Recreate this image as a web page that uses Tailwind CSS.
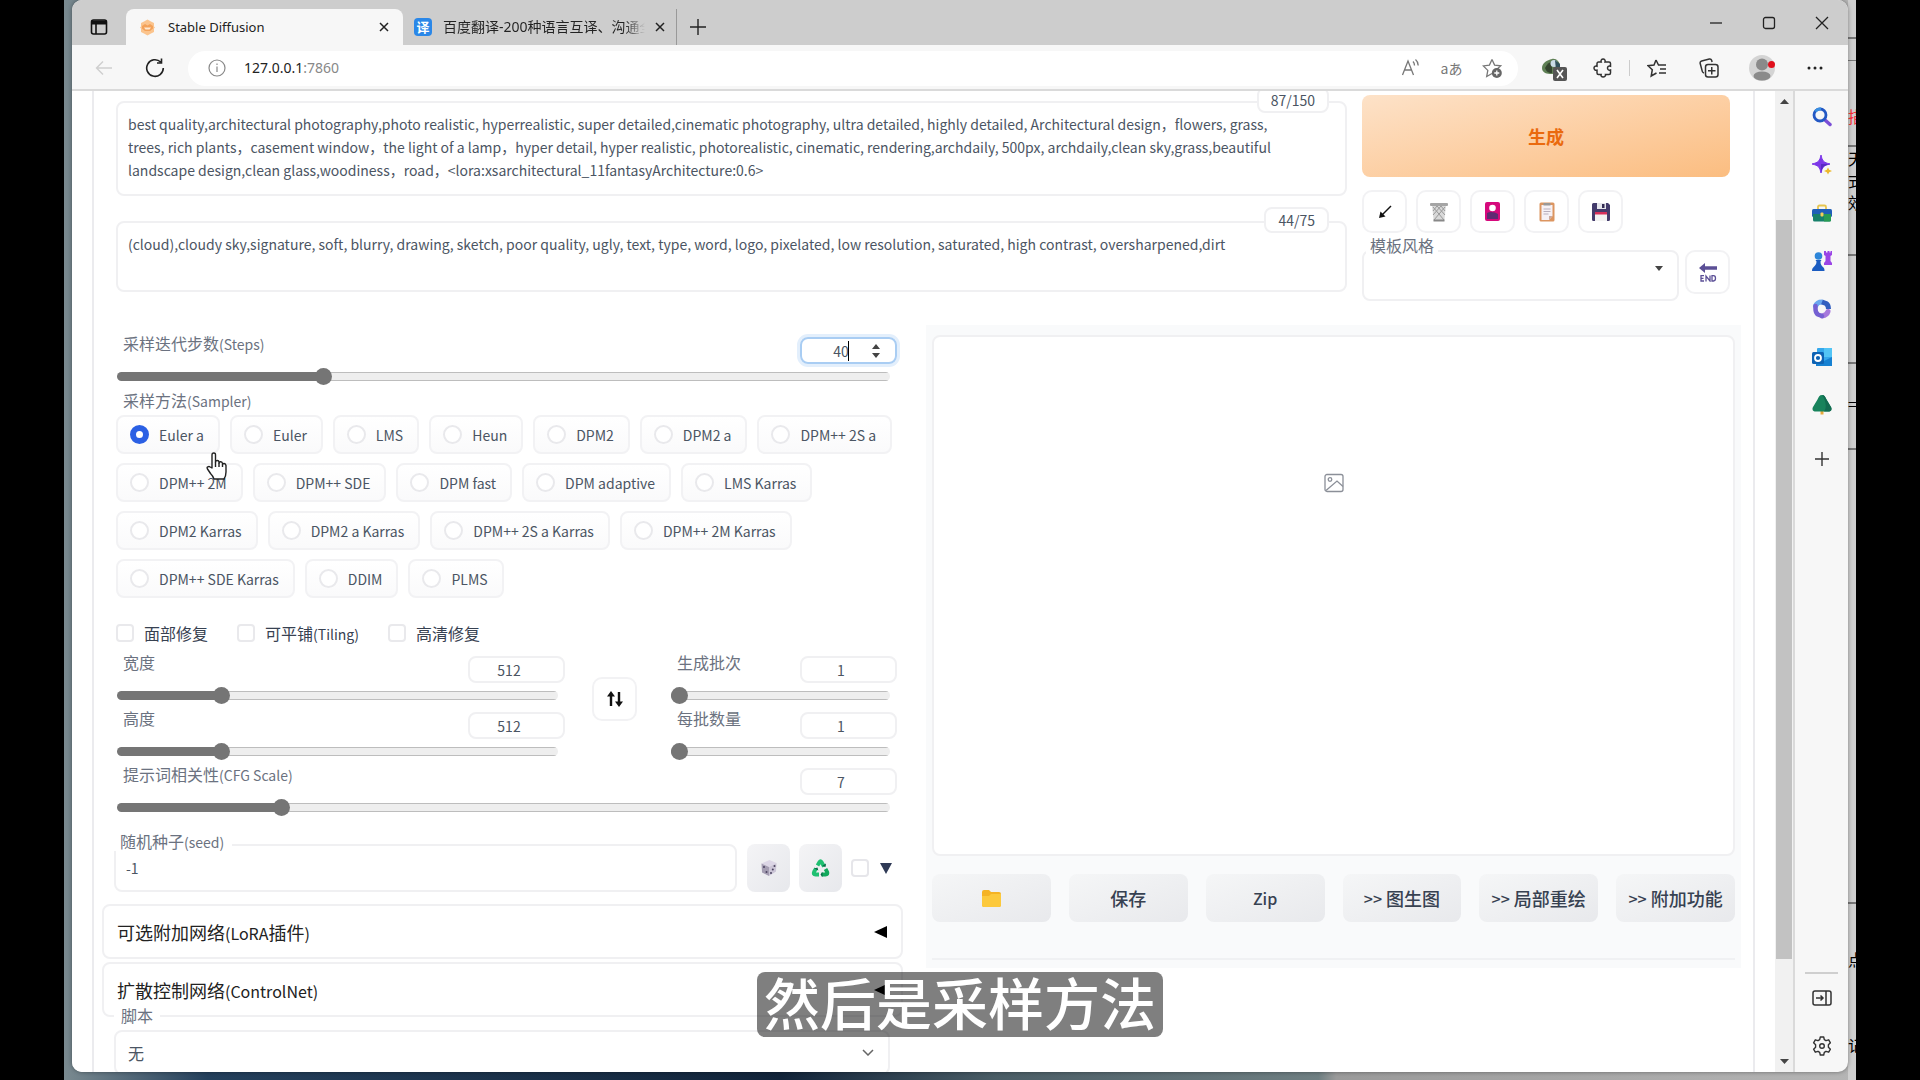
<!DOCTYPE html>
<html lang="zh-CN">
<head>
<meta charset="utf-8"/>
<meta content="width=device-width, initial-scale=1.0" name="viewport"/>
<title>Stable Diffusion</title>
<script src="https://cdn.jsdelivr.net/npm/@tailwindcss/browser@4"></script>
</head>
<body class="h-screen overflow-hidden bg-black px-16 font-['Noto_Sans_CJK_SC',sans-serif] text-sm text-[#4b5563]">
<div class="relative h-full overflow-hidden bg-[linear-gradient(to_right,#7a8a90_0,#24405c_8%,#12243a_40%,#4a5d66_52%,#6f7f82_70%,#9a9a9a_71%,#b5b5b5_100%)] px-2 pb-2">

<!-- document window behind the browser, only its edge shows -->
<div class="absolute inset-y-0 right-0 w-2 overflow-hidden bg-[#cfcfcf] text-base leading-[22px] text-black">
<div class="h-[39px] border-b-2 border-[#777]"></div>
<div class="h-[22px] border-b border-[#777]"></div>
<div class="h-[86px] border-b-2 border-[#777] pt-11 text-red-500">描</div>
<div class="h-[109px] border-b-2 border-[#777] pt-0">天式效</div>
<div class="h-[108px] border-b-2 border-[#777]"></div>
<div class="h-[86px] border-b-2 border-[#777] pt-7">=2</div>
<div class="h-[454px] border-b-2 border-[#777] pt-[380px]">“</div>
<div class="pt-11">点</div>
<div class="pt-16">记</div>
</div>

<div class="relative flex h-full flex-col overflow-hidden rounded-[10px] bg-[#f7f7f7] shadow-[0_0_4px_#0006]">

<!-- tabs -->
<div class="flex h-[45px] shrink-0 items-end bg-[#cdcdcd] font-['Noto_Sans','Noto_Sans_CJK_SC',sans-serif] text-[13px] text-[#222]">
<button aria-label="Tab actions" class="flex h-9 w-[54px] items-center justify-center">
<svg class="size-[18px]" fill="none" stroke="#111" stroke-width="1.6" viewBox="0 0 18 18"><rect height="14" rx="2" width="15" x="1.5" y="2"/><path d="M1.5 4.5h15" stroke-width="4"/><path d="M6 5v11"/></svg>
</button>
<div class="flex h-9 w-[277px] items-center rounded-t-lg bg-[#f7f7f7] pr-2 pl-[13px]">
<svg class="mr-3 size-[17px]" viewBox="0 0 17 17"><path d="M8.500 .5l3 1.800 3.500 1.700v3.500l1 1-1 1v3.500l-3.500 1.700-3 1.800-3-1.800L2 13V9.500l-1-1 1-1V4l3.500-1.700z" fill="#fbc48d"/><path d="M3 7l3-2 2.500 1.500L11 5l3 2v2.500L11 12H6L3 9.500z" fill="#f3a25a"/><path d="M5 8.500h7l-1.500 2h-4z" fill="#ffe9d2"/></svg>
<span class="flex-1">Stable Diffusion</span>
<button aria-label="Close tab" class="flex size-[22px] items-center justify-center"><svg class="size-[10px]" stroke="#222" stroke-width="1.5" viewBox="0 0 10 10"><path d="M1 1l8 8M9 1l-8 8"/></svg></button>
</div>
<div class="flex h-9 w-[274px] items-center border-r border-[#999] pr-[5px] pl-[11px]">
<span class="mr-[11px] flex size-[18px] shrink-0 items-center justify-center rounded-sm bg-[#2a87e8] text-[13px] font-bold text-white">译</span>
<span class="h-5 flex-1 overflow-hidden bg-gradient-to-r from-[#222] from-90% to-transparent bg-clip-text text-sm leading-5 whitespace-nowrap text-transparent">百度翻译-200种语言互译、沟通全世界</span>
<button aria-label="Close tab" class="ml-1 flex size-[22px] items-center justify-center"><svg class="size-[10px]" stroke="#222" stroke-width="1.5" viewBox="0 0 10 10"><path d="M1 1l8 8M9 1l-8 8"/></svg></button>
</div>
<button aria-label="New tab" class="flex h-9 w-[42px] items-center justify-center"><svg class="size-4" stroke="#222" stroke-width="1.4" viewBox="0 0 16 16"><path d="M8 0v16M0 8h16"/></svg></button>
<div class="flex-1"></div>
<button aria-label="Minimize" class="flex h-11 w-[53px] items-center justify-center"><svg class="size-[14px]" fill="none" stroke="#222" stroke-width="1.3" viewBox="0 0 14 14"><path d="M1 7h12"/></svg></button>
<button aria-label="Maximize" class="flex h-11 w-[53px] items-center justify-center"><svg class="size-[14px]" fill="none" stroke="#222" stroke-width="1.3" viewBox="0 0 14 14"><rect height="11" rx="2" width="11" x="1.500" y="1.500"/></svg></button>
<button aria-label="Close" class="flex h-11 w-[53px] items-center justify-center"><svg class="size-[14px]" fill="none" stroke="#222" stroke-width="1.3" viewBox="0 0 14 14"><path d="M1 1l12 12M13 1L1 13"/></svg></button>
</div>

<!-- toolbar -->
<div class="flex h-[46px] shrink-0 items-center border-b-2 border-[#dadada] pt-[2px] pr-[7px] pl-[9px]">
<button aria-label="Back" class="flex w-[46px] justify-center"><svg class="size-[18px]" fill="none" stroke="#cfcfcf" stroke-width="1.4" viewBox="0 0 18 18"><path d="M17 9H1.500M8 2.500L1.500 9 8 15.500"/></svg></button>
<button aria-label="Refresh" class="flex w-14 justify-center"><svg class="size-5" fill="none" stroke="#222" stroke-width="1.6" viewBox="0 0 20 20"><path d="M18.300 10a8.300 8.300 0 1 1-2.600-6M16.500 .5v4.500H12"/></svg></button>
<div class="ml-[5px] flex h-[35px] flex-1 items-center rounded-full bg-white pr-[5px] pl-5">
<svg class="size-[18px]" fill="none" stroke="#888" stroke-width="1.2" viewBox="0 0 18 18"><circle cx="9" cy="9" r="8"/><path d="M9 7.500V13M9 4.500v1.600"/></svg>
<input aria-label="Address" class="sr-only" type="text" value="127.0.0.1:7860"/>
<span class="ml-[18px] flex-1 font-['Noto_Sans',sans-serif] text-sm text-[#222]">127.0.0.1<span class="text-[#888]">:7860</span></span>
<button aria-label="Read aloud" class="flex w-[41px] justify-center"><svg class="size-5" fill="none" stroke="#777" stroke-width="1.3" viewBox="0 0 20 20"><path d="M1.500 17L7 3l5.500 14M3.500 12h7M12 3.500c1 1 1.500 2.300 1.500 4M14.500 1.500c1.800 1.500 2.700 3.600 2.700 6"/></svg></button>
<button aria-label="Translate" class="w-[41px] text-sm leading-5 text-[#777]">aあ</button>
<button aria-label="Add to favorites" class="flex w-[41px] justify-center"><svg class="size-[21px]" fill="none" stroke="#777" stroke-width="1.300" viewBox="0 0 21 21"><path d="M10 1.500l2.600 5.600 6.100.7-4.500 4.200 .5 2.500M10 15.500l-5.300 3 1.100-6.100L1.300 7.900l6.100-.8L10 1.500"/><circle cx="14.800" cy="15" fill="#666" r="5" stroke="none"/><path d="M14.800 12.500v5M12.300 15h5" stroke="#fff"/></svg></button>
</div>
<button aria-label="Extension" class="ml-[11px] flex w-[49px] justify-center"><svg class="h-7 w-[26px]" viewBox="0 0 26 28"><path d="M1 14c0-5 5-8 10-9 4-1 8 3 8 7s-3 8-8 8-10-1-10-6z" fill="#5f8055"/><path d="M4 14c2-4 4-6 7-6v11c-4 0-6-2-7-5z" fill="#34452f"/><circle cx="13" cy="9.500" fill="#c9dbe6" r="3.500"/><path d="M14 6l5 4v6h-4z" fill="#31515c"/><rect fill="#555" height="14" rx="2" width="14" x="12" y="13"/><path d="M16 16l6 8M22 16l-6 8" stroke="#fff" stroke-width="1.600"/></svg></button>
<button aria-label="Extensions" class="flex w-[49px] justify-center"><svg class="size-5" fill="none" stroke="#333" stroke-width="1.500" viewBox="0 0 20 20"><path d="M5.500 4h2.700c-.6-1.800.4-3 1.900-3s2.500 1.200 1.900 3H16a1.500 1.500 0 0 1 1.500 1.500v2.700c-2-.5-3 .5-3 1.900s1 2.400 3 1.900v3a1.500 1.500 0 0 1-1.500 1.500h-3.500c.4 1.500-.9 2.500-2.400 2.500s-2.500-1-2-2.500H5.500A1.500 1.500 0 0 1 4 15v-2.800c-1.800.5-3-.6-3-2.100s1.200-2.400 3-1.900V5.500A1.500 1.500 0 0 1 5.500 4z"/></svg></button>
<div class="mr-px ml-[2px] h-4 w-px bg-[#ccc]"></div>
<button aria-label="Favorites" class="flex w-[52px] justify-center"><svg class="size-5" fill="none" stroke="#333" stroke-width="1.500" viewBox="0 0 20 20"><path d="M9 2l-2 5-6 .7 4.300 4L4.200 18 9.500 15M9 2l2.500 5H19M13 11h6M12 15h7"/></svg></button>
<button aria-label="Collections" class="flex w-[52px] justify-center"><svg class="size-5" fill="none" stroke="#333" stroke-width="1.500" viewBox="0 0 20 20"><path d="M5 15c-1-.3-1.500-.8-1.700-1.600L1.200 5.500c-.3-1.200.3-2.200 1.500-2.500l7.600-2c1-.2 2 .3 2.300 1.300l.5 1.700"/><rect height="12.500" rx="2.500" width="12.500" x="6.500" y="6.500"/><path d="M12.750 9v7.500M9 12.750h7.500"/></svg></button>
<button aria-label="Profile" class="flex w-[53px] justify-center"><svg class="size-[26px]" viewBox="0 0 26 26"><circle cx="13" cy="13" fill="#d4d4d4" r="13"/><circle cx="13" cy="9.500" fill="#8a8a8a" r="6"/><ellipse cx="13" cy="21" fill="#8a8a8a" rx="8.500" ry="4.500"/><circle cx="22.500" cy="9.500" fill="#e0101c" r="3.500"/></svg></button>
<button aria-label="Settings and more" class="flex w-[53px] justify-center"><svg class="h-1 w-4" fill="#222" viewBox="0 0 16 4"><circle cx="2" cy="2" r="1.500"/><circle cx="8" cy="2" r="1.500"/><circle cx="14" cy="2" r="1.500"/></svg></button>
</div>

<div class="flex min-h-0 flex-1">
<!-- page -->
<main class="min-w-0 flex-1 overflow-hidden bg-white pr-5 pl-5">
<div class="h-full overflow-hidden border-x-2 border-[#ebebee]">

<section class="flex items-start gap-[15px] pr-[23px] pl-[22px]">
<div class="min-w-0 flex-1 pt-[10px]">
<div class="relative mb-[25px] h-[95px] rounded-lg border-2 border-[#f0f0f2] px-[10px] pt-[10px]">
<textarea aria-label="Prompt" class="block h-[72px] w-full resize-none overflow-hidden text-sm leading-[23px] outline-none">best quality,architectural photography,photo realistic, hyperrealistic, super detailed,cinematic photography, ultra detailed, highly detailed, Architectural design，flowers, grass,
trees, rich plants，casement window，the light of a lamp，hyper detail, hyper realistic, photorealistic, cinematic, rendering,archdaily, 500px, archdaily,clean sky,grass,beautiful
landscape design,clean glass,woodiness，road，&lt;lora:xsarchitectural_11fantasyArchitecture:0.6&gt;</textarea>
<span class="absolute -top-4 right-4 rounded-lg border-2 border-[#f0f0f2] bg-white px-3 leading-[22px]">87/150</span>
</div>
<div class="relative h-[71px] rounded-lg border-2 border-[#f0f0f2] px-[10px] pt-[10px]">
<textarea aria-label="Negative prompt" class="block h-12 w-full resize-none overflow-hidden text-sm leading-[23px] outline-none">(cloud),cloudy sky,signature, soft, blurry, drawing, sketch, poor quality, ugly, text, type, word, logo, pixelated, low resolution, saturated, high contrast, oversharpened,dirt</textarea>
<span class="absolute -top-4 right-4 rounded-lg border-2 border-[#f0f0f2] bg-white px-3 leading-[22px]">44/75</span>
</div>
</div>
<div class="w-[368px] pt-1">
<button class="h-[82px] w-full rounded-lg bg-linear-to-br from-[#fde2c8] to-[#fbbd80] text-lg font-bold text-[#ea6a0e]">生成</button>
<div class="mt-[13px] flex gap-[9px]">
<button aria-label="Read parameters" class="flex h-[43px] w-[45px] items-center justify-center rounded-[10px] border-2 border-[#f2f2f4]"><svg class="size-[14px]" stroke="#111" stroke-width="1.5" viewBox="0 0 14 14"><path d="M13 1L4 10"/><path d="M1 13l1.500-6.500 5 5z" fill="#111" stroke="none"/></svg></button>
<button aria-label="Clear prompt" class="flex h-[43px] w-[45px] items-center justify-center rounded-[10px] border-2 border-[#f2f2f4]"><svg class="h-5 w-[18px]" viewBox="0 0 18 20"><path d="M2 3h14l-1.700 16H3.700z" fill="#d9d9d9"/><path d="M3 5l11 13M7 4l8 9M11 4l4 5M15 5L4 18M11 4l-8 9M7 4L3 9" stroke="#999" stroke-width="1"/><rect fill="#a5a5a5" height="3" rx="1" width="18" y="1"/><path d="M3.500 18.500h11" stroke="#888" stroke-width="2"/></svg></button>
<button aria-label="Extra networks" class="flex h-[43px] w-[45px] items-center justify-center rounded-[10px] border-2 border-[#f2f2f4]"><svg class="h-[19px] w-[15px]" viewBox="0 0 15 19"><rect fill="#d6097c" height="19" rx="2" width="15"/><path d="M2 11c3-2 8-1 11 1v5H2z" fill="#5f2a72"/><circle cx="7.500" cy="6" fill="#fff" r="3.300"/></svg></button>
<button aria-label="Apply style" class="flex h-[43px] w-[45px] items-center justify-center rounded-[10px] border-2 border-[#f2f2f4]"><svg class="h-5 w-4" viewBox="0 0 16 20"><rect fill="#dc9560" height="19" rx="1.500" width="15" x=".5" y=".5"/><path d="M2.500 3h11v11l-3.500 4H2.500z" fill="#f6f1f5"/><path d="M10 18v-4h3.500z" fill="#c9a9a0"/><rect fill="#999" height="2.500" width="7" x="4.500" y="1"/><path d="M4.500 7h7M4.500 9.500h7M4.500 12h5" stroke="#b8aebc"/></svg></button>
<button aria-label="Save style" class="flex h-[43px] w-[45px] items-center justify-center rounded-[10px] border-2 border-[#f2f2f4]"><svg class="size-[18px]" viewBox="0 0 18 18"><path d="M0 1.500A1.500 1.500 0 0 1 1.500 0H16l2 2v14.500a1.500 1.500 0 0 1-1.500 1.500h-15A1.500 1.500 0 0 1 0 16.500z" fill="#433b6b"/><rect fill="#e6e6ec" height="6" width="9" x="5"/><rect fill="#322b52" height="4" width="2.500" x="10" y="1"/><rect fill="#f2f2f2" height="9" width="12" x="3" y="9"/><rect fill="#d6305b" height="2.500" width="12" x="3" y="9"/></svg></button>
</div>
<div class="mt-[17px] flex items-start gap-[6px]">
<div class="relative flex-1">
<label class="absolute -top-[15px] left-1 bg-white px-1 text-base leading-5 text-[#6b7280]" for="styles">模板风格</label>
<select class="block h-[51px] w-full appearance-none rounded-lg border-2 border-[#f0f0f2] px-3" id="styles"><option></option></select>
<svg class="absolute top-4 right-4 h-[5px] w-2" fill="#444" viewBox="0 0 8 5"><path d="M0 0h8L4 5z"/></svg>
</div>
<button aria-label="Apply selected styles" class="flex h-[44px] w-[45px] items-center justify-center rounded-[10px] border-2 border-[#f2f2f4]"><svg class="h-[19px] w-[18px]" fill="none" stroke="#5b4f96" viewBox="0 0 18 19"><path d="M5 5h13" stroke-width="3.500"/><path d="M0 5l6-5v10z" fill="#5b4f96" stroke="none"/><path d="M5 12.700H2V18h3M2 15.300h2.500M7 18.500v-5.500l4 5v-5.500M13 12.700h1.500q2 0 2 2.600t-2 2.700H13z" stroke-width="1.300"/></svg></button>
</div>
</div>
</section>

<section class="mt-6 flex items-start gap-[23px] pr-3 pl-2">
<!-- generation settings -->
<form class="min-w-0 flex-[801] pt-3 [&_input[type=number]]:h-[27px] [&_input[type=number]]:w-[97px] [&_input[type=number]]:rounded-lg [&_input[type=number]]:border-2 [&_input[type=number]]:border-[#f0f0f2] [&_input[type=number]]:text-center [&_input[type=number]]:outline-none [&_input::-webkit-inner-spin-button]:opacity-0 [&_input[type=range]]:mt-1 [&_input[type=range]]:block [&_input[type=range]]:h-[17px] [&_input[type=range]]:appearance-none [&_input[type=range]]:bg-transparent [&_input::-webkit-slider-runnable-track]:h-[9px] [&_input::-webkit-slider-runnable-track]:rounded-full [&_input::-webkit-slider-runnable-track]:bg-[linear-gradient(to_right,#757575_var(--fill),transparent_var(--fill)),linear-gradient(#bdbdbd_1px,#eeeeee_1px,#eeeeee_8px,#bdbdbd_8px)] [&_input::-webkit-slider-thumb]:-mt-1 [&_input::-webkit-slider-thumb]:size-[17px] [&_input::-webkit-slider-thumb]:appearance-none [&_input::-webkit-slider-thumb]:rounded-full [&_input::-webkit-slider-thumb]:bg-[#757575]">
<div class="pr-[6px] pl-[15px]">
<div class="relative flex items-start justify-between pl-[6px]">
<label class="text-base leading-3 text-[#6b7280]" for="steps">采样迭代步数<span class="text-[14px]">(Steps)</span></label>
<input class="border-[#a9cdf3]! shadow-[0_0_0_3px_#e3effc]" id="steps" max="150" min="1" type="number" value="40"/>
<span class="absolute top-1 right-[48px] h-5 w-px bg-black"></span>
<svg class="absolute top-[7px] right-[17px] h-[14px] w-2" fill="#444" viewBox="0 0 8 14"><path d="M0 5h8L4 0zM0 9h8l-4 5z"/></svg>
</div>
<div class="pr-[7px]"><input aria-label="Steps" class="w-full" max="150" min="1" style="--fill:27%" type="range" value="40"/></div>

<fieldset class="-ml-px">
<legend class="mb-[5px] pt-[6px] pl-[7px] text-base leading-[18px] text-[#6b7280]">采样方法<span class="text-[14px]">(Sampler)</span></legend>
<div class="flex flex-wrap gap-x-[10px] gap-y-[9px]" id="samplers"></div>
</fieldset>

<div class="mt-[26px] -ml-px flex gap-[29px] text-base leading-[18px] text-[#374151]">
<label class="flex gap-[10px]"><input class="size-[18px] appearance-none rounded border-2 border-[#e9e9ec]" type="checkbox"/>面部修复</label>
<label class="flex gap-[10px]"><input class="size-[18px] appearance-none rounded border-2 border-[#e9e9ec]" type="checkbox"/><span>可平铺<span class="text-[14px]">(Tiling)</span></span></label>
<label class="flex gap-[10px]"><input class="size-[18px] appearance-none rounded border-2 border-[#e9e9ec]" type="checkbox"/>高清修复</label>
</div>

<div class="mt-[13px] flex items-start">
<div class="flex-[448]">
<div class="flex items-start justify-between pl-[6px]">
<label class="text-base leading-3 text-[#6b7280]" for="width">宽度</label>
<input id="width" type="number" value="512"/>
</div>
<div class="pr-[7px]"><input aria-label="Width" class="w-full" max="2048" min="64" step="8" style="--fill:23%" type="range" value="512"/></div>
<div class="mt-2 flex items-start justify-between pl-[6px]">
<label class="text-base leading-3 text-[#6b7280]" for="height">高度</label>
<input id="height" type="number" value="512"/>
</div>
<div class="pr-[7px]"><input aria-label="Height" class="w-full" max="2048" min="64" step="8" style="--fill:23%" type="range" value="512"/></div>
</div>
<button aria-label="Swap width and height" class="mt-[21px] mr-[34px] ml-[27px] flex h-[44px] w-[45px] items-center justify-center rounded-[10px] border-2 border-[#f2f2f4]" type="button"><svg class="size-4" fill="#111" viewBox="0 0 16 16"><path d="M4 0l4 5.500H5.200V15H2.800V5.500H0zM12 16l-4-5.500h2.800V1h2.400v9.500H16z"/></svg></button>
<div class="flex-[226]">
<div class="flex items-start justify-between pl-[6px]">
<label class="text-base leading-3 text-[#6b7280]" for="batch-count">生成批次</label>
<input id="batch-count" type="number" value="1"/>
</div>
<div class="pr-[7px]"><input aria-label="Batch count" class="w-full" max="100" min="1" style="--fill:2%" type="range" value="1"/></div>
<div class="mt-2 flex items-start justify-between pl-[6px]">
<label class="text-base leading-3 text-[#6b7280]" for="batch-size">每批数量</label>
<input id="batch-size" type="number" value="1"/>
</div>
<div class="pr-[7px]"><input aria-label="Batch size" class="w-full" max="8" min="1" style="--fill:2%" type="range" value="1"/></div>
</div>
</div>

<div class="mt-2 flex items-start justify-between pl-[6px]">
<label class="text-base leading-3 text-[#6b7280]" for="cfg">提示词相关性<span class="text-[14px]">(CFG Scale)</span></label>
<input id="cfg" type="number" value="7"/>
</div>
<div class="pr-[7px]"><input aria-label="CFG Scale" class="w-full" max="30" min="1" step="0.5" style="--fill:21%" type="range" value="7"/></div>
</div>

<div class="mt-7 flex items-center pr-[11px] pl-3">
<div class="relative mr-[10px] flex-1">
<label class="absolute -top-3 left-0 bg-white pr-2 pl-[6px] text-base leading-[18px] text-[#6b7280]" for="seed">随机种子<span class="text-[14px]">(seed)</span></label>
<input class="block h-12 w-full rounded-lg border-2 border-[#f0f0f2] px-[10px] outline-none" id="seed" type="text" value="-1"/>
</div>
<button aria-label="Random seed" class="mr-[9px] flex h-12 w-[43px] items-center justify-center rounded-lg bg-linear-to-br from-[#f4f4f6] to-[#e7e8ec]" type="button"><svg class="size-[18px]" viewBox="0 0 18 18"><path d="M1.500 4.500L9.500 1l7 3-7.500 4z" fill="#dcd6e6"/><path d="M1.500 4.500L9 8v9l-7-3.500z" fill="#a49db2"/><path d="M16.500 4L9 8v9l7-4.500z" fill="#cbc5d6"/><g fill="#4b4360"><circle cx="4" cy="8" r="1"/><circle cx="6.500" cy="13" r="1"/><circle cx="11" cy="14" r="1"/><circle cx="14.500" cy="7" r="1"/><circle cx="12.800" cy="10.500" r="1"/></g></svg></button>
<button aria-label="Reuse seed" class="mr-[9px] flex h-12 w-[43px] items-center justify-center rounded-lg bg-linear-to-br from-[#f4f4f6] to-[#e7e8ec]" type="button"><svg class="size-[19px]" fill="none" viewBox="0 0 19 19"><path d="M6.500 6.500L8.500 3q1-1.500 2 0l2.500 4.500" stroke="#1fc071" stroke-width="3.800"/><path d="M14.500 10l1.700 3q1 2.500-1.700 2.500h-4" stroke="#12a95c" stroke-width="3.800"/><path d="M8 15.500H4.500q-2.700 0-1.500-2.500L5 9.500" stroke="#1fc071" stroke-width="3.800"/><path d="M11 7l3.500 1 .5-3.500zM11.500 13v5l-2-2.500zM3 9.500l3.500-1 .8 3z" fill="#0a6b48"/></svg></button>
<label class="flex items-center gap-[11px] text-[#374151]"><input aria-label="Extra" class="size-[18px] appearance-none rounded border-2 border-[#e6e6ea]" type="checkbox"/><svg class="h-[11px] w-3" fill="#2f3a56" viewBox="0 0 12 11"><path d="M0 0h12L6 11z"/></svg></label>
</div>

<button class="mt-3 flex h-[55px] w-full items-center justify-between rounded-lg border-2 border-[#f0f0f2] pr-[14px] pl-[13px] text-lg text-[#222]" type="button"><span>可选附加网络<span class="text-base">(LoRA</span>插件<span class="text-base">)</span></span><svg class="h-3 w-[13px]" fill="#000" viewBox="0 0 13 12"><path d="M13 0v12L0 6z"/></svg></button>
<button class="mt-[3px] flex h-[55px] w-full items-center justify-between rounded-lg border-2 border-[#f0f0f2] pr-[14px] pl-[13px] text-lg text-[#222]" type="button"><span>扩散控制网络<span class="text-base">(ControlNet)</span></span><svg class="h-3 w-[13px]" fill="#000" viewBox="0 0 13 12"><path d="M13 0v12L0 6z"/></svg></button>
<div class="relative mt-[13px] pr-[13px] pl-3">
<label class="absolute -top-6 left-3 bg-white px-[7px] text-base leading-[18px] text-[#6b7280]" for="script">脚本</label>
<select class="block h-[45px] w-full appearance-none rounded-lg border-2 border-[#f0f0f2] px-3 text-base text-[#4b5563]" id="script"><option>无</option></select>
<svg class="absolute top-[19px] right-[29px] h-[7px] w-3" fill="none" stroke="#666" stroke-width="1.500" viewBox="0 0 12 7"><path d="M1 1l5 5 5-5"/></svg>
</div>
</form>

<!-- result -->
<div class="min-w-0 flex-[803] bg-[#f9fafb] px-[6px] pt-[10px] pb-2">
<div class="flex h-[521px] justify-center rounded-lg border-2 border-[#f0f0f2] bg-white pt-[136px]">
<svg class="size-5" fill="none" stroke="#8b8f98" stroke-width="1.300" viewBox="0 0 20 20"><rect height="17" rx="2" width="18" x="1" y="1.500"/><circle cx="6" cy="6.500" r="1.800"/><path d="M2 17.500L13 8l6 5.500"/></svg>
</div>
<div class="mt-[18px] grid grid-cols-6 gap-[18px] border-b-2 border-[#f0f1f3] pb-9 [&>button]:flex [&>button]:h-[48px] [&>button]:items-center [&>button]:justify-center [&>button]:rounded-lg [&>button]:bg-linear-to-br [&>button]:from-[#f5f6f7] [&>button]:to-[#e8e9ec] [&>button]:text-lg [&>button]:font-medium [&>button]:whitespace-nowrap [&>button]:text-[#374151]">
<button aria-label="Open folder"><svg class="h-[17px] w-[19px]" viewBox="0 0 19 17"><path d="M0 2q0-2 2-2h5l2 2h8q2 0 2 2v11q0 2-2 2H2q-2 0-2-2z" fill="#f5b324"/><path d="M0 6h7l2-2h10v11q0 2-2 2H2q-2 0-2-2z" fill="#fcc93c"/></svg></button>
<button>保存</button>
<button><span class="text-base">Zip</span></button>
<button><span class="mr-1 text-base">&gt;&gt;</span>图生图</button>
<button><span class="mr-1 text-base">&gt;&gt;</span>局部重绘</button>
<button><span class="mr-1 text-base">&gt;&gt;</span>附加功能</button>
</div>
</div>
</section>
</div>
</main>

<!-- page scrollbar -->
<div class="flex w-[18px] flex-col items-center bg-[#f1f1f1] py-2">
<svg class="h-[5px] w-[9px]" fill="#444" viewBox="0 0 9 5"><path d="M0 5h9L4.500 0z"/></svg>
<div class="mt-[116px] h-[739px] w-4 bg-[#c2c2c2]"></div>
<svg class="mt-auto h-[5px] w-[9px]" fill="#444" viewBox="0 0 9 5"><path d="M0 0h9L4.500 5z"/></svg>
</div>

<!-- browser sidebar -->
<aside class="flex w-[55px] flex-col items-center border-l-2 border-[#dadada] pt-[2px] pb-[2px] [&>button]:flex [&>button]:h-12 [&>button]:shrink-0 [&>button]:items-center [&_svg]:size-5">
<button aria-label="Search"><svg fill="none" viewBox="0 0 20 20"><path d="M13 13l5 4.500" stroke="#7b4fd6" stroke-linecap="round" stroke-width="3.500"/><circle cx="8" cy="8" r="6" stroke="#2358c4" stroke-width="2.800"/><path d="M3.500 4.500A6 6 0 0 1 9 2" stroke="#3b8fe0" stroke-width="2.800"/></svg></button>
<button aria-label="Discover"><svg viewBox="0 0 20 20"><path d="M9 0c1.300 6 2.500 7.500 9 9-6.500 1.500-7.700 3-9 9-1.300-6-2.500-7.500-9-9 6.500-1.500 7.700-3 9-9z" fill="#7d38e8" stroke="#7d38e8"/><path d="M9 9h9c-6.500 1.500-7.700 3-9 9z" fill="#5a2bc4"/><path d="M16 12.500l1.200 2.300L20 16l-2.800 1.200L16 19.500l-1.200-2.300L12 16l2.800-1.200z" fill="#edb92e"/></svg></button>
<button aria-label="Tools"><svg viewBox="0 0 20 20"><path d="M6 6V4q0-1.500 1.500-1.500h5Q14 2.500 14 4v2" fill="none" stroke="#e7c650" stroke-width="1.800"/><rect fill="#1f5fb8" height="8" rx="1.500" width="20" y="6"/><path d="M1 11h18v6q0 1.500-1.500 1.500h-15Q1 18.500 1 17z" fill="#17806b"/><path d="M12 11h7v6q0 1.500-1.500 1.500H12z" fill="#279b53"/><rect fill="#f1cf58" height="4" rx="1" width="3" x="8.500" y="9.500"/></svg></button>
<button aria-label="Games"><svg viewBox="0 0 20 20"><circle cx="6.500" cy="5" fill="#2d86d9" r="3.800"/><path d="M3.500 9h6l-1 1.500c0 3 1 4 2.500 5.500 1 1 1.500 1.500 1.500 4H0c0-2.500.7-3 1.700-4C3.500 14 4.500 13 4.500 10.500z" fill="#1b5cc0"/><path d="M12 0h2v1.500h1.500V0h2v1.500h1V0H20v4l-1.500 1v5l1.500 2v2h-8v-2l1.500-2V5L12 4z" fill="#9b45e6"/></svg></button>
<button aria-label="Microsoft 365"><svg fill="none" viewBox="0 0 20 20"><path d="M3.500 7Q5 3 10 3" stroke="#6aa7ee" stroke-linecap="round" stroke-width="5"/><path d="M10 3l4 1.500q2.500 1.500 2.500 5.500" stroke="#315ec0" stroke-width="5"/><path d="M16 12.500q-1 3.500-6 4.500" stroke="#a678dc" stroke-linecap="round" stroke-width="5"/><path d="M10 17l-4-1.500Q3.500 14 3.500 10V7" stroke="#7560d2" stroke-linecap="round" stroke-width="4.500"/></svg></button>
<button aria-label="Outlook"><svg viewBox="0 0 20 20"><rect fill="#35a8ec" height="14" rx="1" width="15" x="5" y="1"/><path d="M12 1h8v9h-8z" fill="#52c4f5"/><path d="M4 11l8 3 8-4v9H4z" fill="#1681d2"/><rect fill="#0e63b4" height="12" rx="1.500" width="12" y="5"/><circle cx="6" cy="11" fill="none" r="3" stroke="#fff" stroke-width="1.800"/></svg></button>
<button aria-label="E-tree"><svg viewBox="0 0 20 20"><path d="M8.500 15h3v4.500h-3z" fill="#e6a83a"/><path d="M10 0c2.500 0 3.300 2 4.500 4.500L19 12c1.500 3-.5 4.500-3 4.500H4c-2.500 0-4.500-1.500-3-4.500l4.500-7.500C6.700 2 7.500 0 10 0z" fill="#18835c"/><path d="M10 0c2.500 0 3.300 2 4.500 4.500L19 12c1.500 3-.5 4.500-3 4.500h-4c3-4 2-11-2-16.500z" fill="#126b50"/></svg></button>
<button aria-label="Customize" class="mt-[6px]"><svg stroke="#333" stroke-width="1.400" viewBox="0 0 20 20"><path d="M10 3v14M3 10h14"/></svg></button>
<div class="mt-auto w-[33px] border-t-2 border-[#cfcfcf]"></div>
<button aria-label="Hide sidebar"><svg fill="none" stroke="#333" stroke-width="1.500" viewBox="0 0 20 20"><rect height="14" rx="2" width="18" x="1" y="3"/><path d="M14 3v14M4 10h7M8.500 7.500L11 10l-2.500 2.500"/></svg></button>
<button aria-label="Sidebar settings"><svg fill="none" stroke="#333" stroke-width="1.400" viewBox="0 0 20 20"><path d="M8.300 1h3.400l.6 2.700 1.700 1 2.700-.9 1.700 3-2 2v2.400l2 2-1.700 3-2.700-.9-1.700 1-.6 2.700H8.300l-.6-2.700-1.700-1-2.700.9-1.700-3 2-2V8.800l-2-2 1.700-3 2.700.9 1.700-1z" stroke-linejoin="round"/><circle cx="10" cy="10" r="2.300"/></svg></button>
</aside>
</div>
</div>

<!-- cursor and subtitle -->
<svg class="absolute top-[452px] left-[142px] h-[28px] w-[22px]" fill="#fff" stroke="#222" stroke-linejoin="round" stroke-width="1.400" viewBox="0 0 22 28"><path d="M6 16V3q0-2 1.800-2T9.500 3v7q0-1.500 1.700-1.500T13 10v1q.3-1.500 1.800-1.300T16.500 11.500v1q.3-1.200 1.700-1t1.800 2V20q0 4-2 7H8q-1-3-3.500-5.500L1.500 17q-1-1.500.3-2.200t2.400.2z"/><path d="M9.500 10v5M13 11v4M16.500 12.500V15" fill="none"/></svg>
<div class="absolute bottom-[43px] left-1/2 -translate-x-1/2 rounded-lg bg-black/50 px-[7px] pb-2 text-[56px] leading-[57px] font-medium whitespace-nowrap text-white">然后是采样方法</div>
</div>

<script>
const samplers = ["Euler a", "Euler", "LMS", "Heun", "DPM2", "DPM2 a", "DPM++ 2S a", "DPM++ 2M", "DPM++ SDE",
  "DPM fast", "DPM adaptive", "LMS Karras", "DPM2 Karras", "DPM2 a Karras", "DPM++ 2S a Karras",
  "DPM++ 2M Karras", "DPM++ SDE Karras", "DDIM", "PLMS"];

document.getElementById("samplers").innerHTML = samplers.map((nome, i) => `
  <label class="flex h-[39px] items-center gap-[10px] rounded-lg border-2 border-[#f2f2f4] bg-linear-to-b from-white to-[#fafafb] pr-[14px] pl-3">
    <input class="size-[19px] appearance-none rounded-full border-2 border-[#e9e9ec] bg-white checked:border-[6px] checked:border-[#2b60e4]" name="sampler" type="radio" ${i === 0 ? "checked" : ""}/>
    <span>${nome}</span>
  </label>`).join("");
</script>
</body>
</html>
